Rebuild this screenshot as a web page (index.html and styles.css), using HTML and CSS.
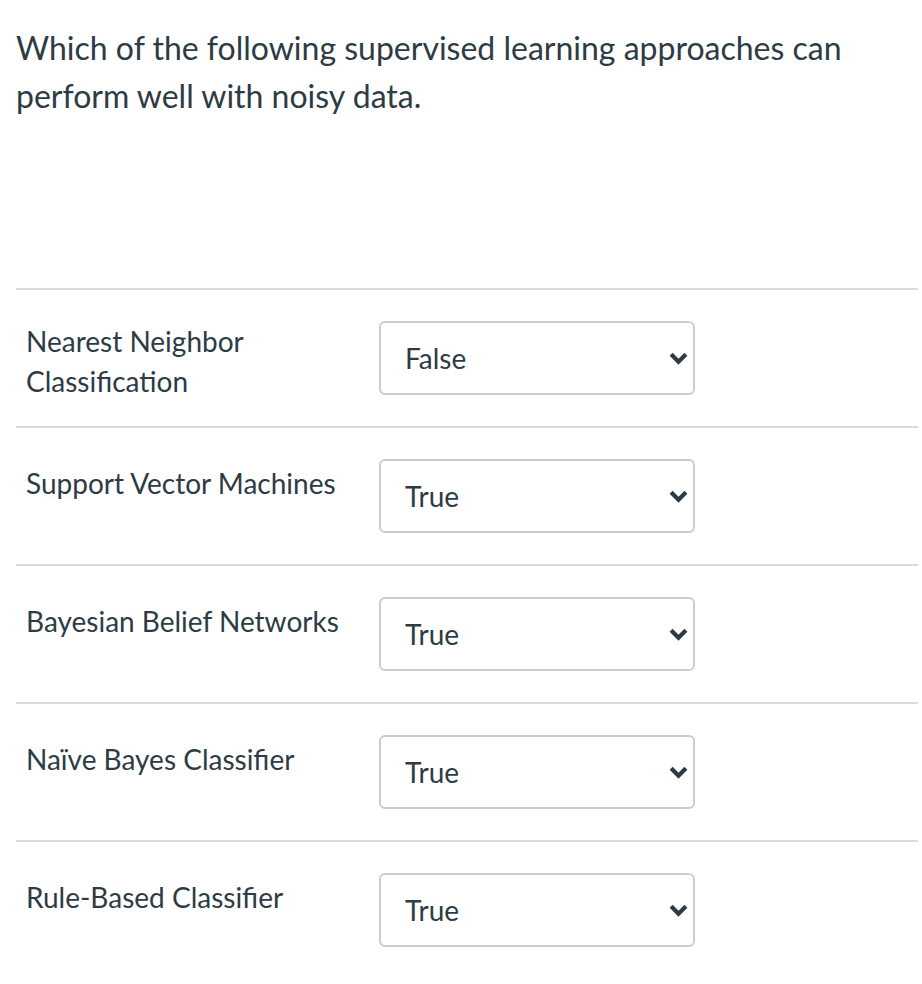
FILE: index.html
```html
<!DOCTYPE html>
<html>
<head>
<meta charset="utf-8">
<link rel="stylesheet" href="styles.css">
</head>
<body>
<div class="quiz">
  <p class="question">Which of the following supervised learning approaches can perform well with noisy data.</p>
  <div class="answers">
    <div class="row">
      <div class="label">Nearest Neighbor Classification</div>
      <div class="select"><span>False</span><svg class="chev" viewBox="0 0 18 12"><polyline points="2,2 9,9 16,2"/></svg></div>
    </div>
    <div class="row">
      <div class="label single">Support Vector Machines</div>
      <div class="select"><span>True</span><svg class="chev" viewBox="0 0 18 12"><polyline points="2,2 9,9 16,2"/></svg></div>
    </div>
    <div class="row">
      <div class="label single">Bayesian Belief Networks</div>
      <div class="select"><span>True</span><svg class="chev" viewBox="0 0 18 12"><polyline points="2,2 9,9 16,2"/></svg></div>
    </div>
    <div class="row">
      <div class="label single">Naïve Bayes Classifier</div>
      <div class="select"><span>True</span><svg class="chev" viewBox="0 0 18 12"><polyline points="2,2 9,9 16,2"/></svg></div>
    </div>
    <div class="row">
      <div class="label single">Rule-Based Classifier</div>
      <div class="select"><span>True</span><svg class="chev" viewBox="0 0 18 12"><polyline points="2,2 9,9 16,2"/></svg></div>
    </div>
  </div>
</div>
</body>
</html>
```
FILE: styles.css
```css
html, body {
  margin: 0;
  padding: 0;
  background: #ffffff;
}
body {
  font-family: Lato, "Open Sans", sans-serif;
  color: #2d3b45;
}
.quiz {
  padding: 0 4px 0 16px;
}
.question {
  margin: 0;
  padding-top: 24px;
  font-size: 32px;
  line-height: 48px;
  height: 288px;
  box-sizing: border-box;
  width: 840px;
}
.row {
  border-top: 2px solid #d9dcde;
  display: flex;
  align-items: flex-start;
  padding: 31px 0 32px 10px;
  height: 138px;
  box-sizing: border-box;
}
.label {
  width: 353px;
  font-size: 28px;
  line-height: 40px;
}
.label.single {
  padding-top: 4px;
}
.select {
  width: 316px;
  height: 74px;
  box-sizing: border-box;
  border: 2px solid #c7cdd1;
  border-radius: 6px;
  display: flex;
  align-items: center;
  justify-content: space-between;
  padding: 0 5px 0 24px;
  font-size: 28px;
}
.chev {
  width: 19px;
  height: 13px;
  fill: none;
  stroke: #2d3b45;
  stroke-width: 4;
}
```
